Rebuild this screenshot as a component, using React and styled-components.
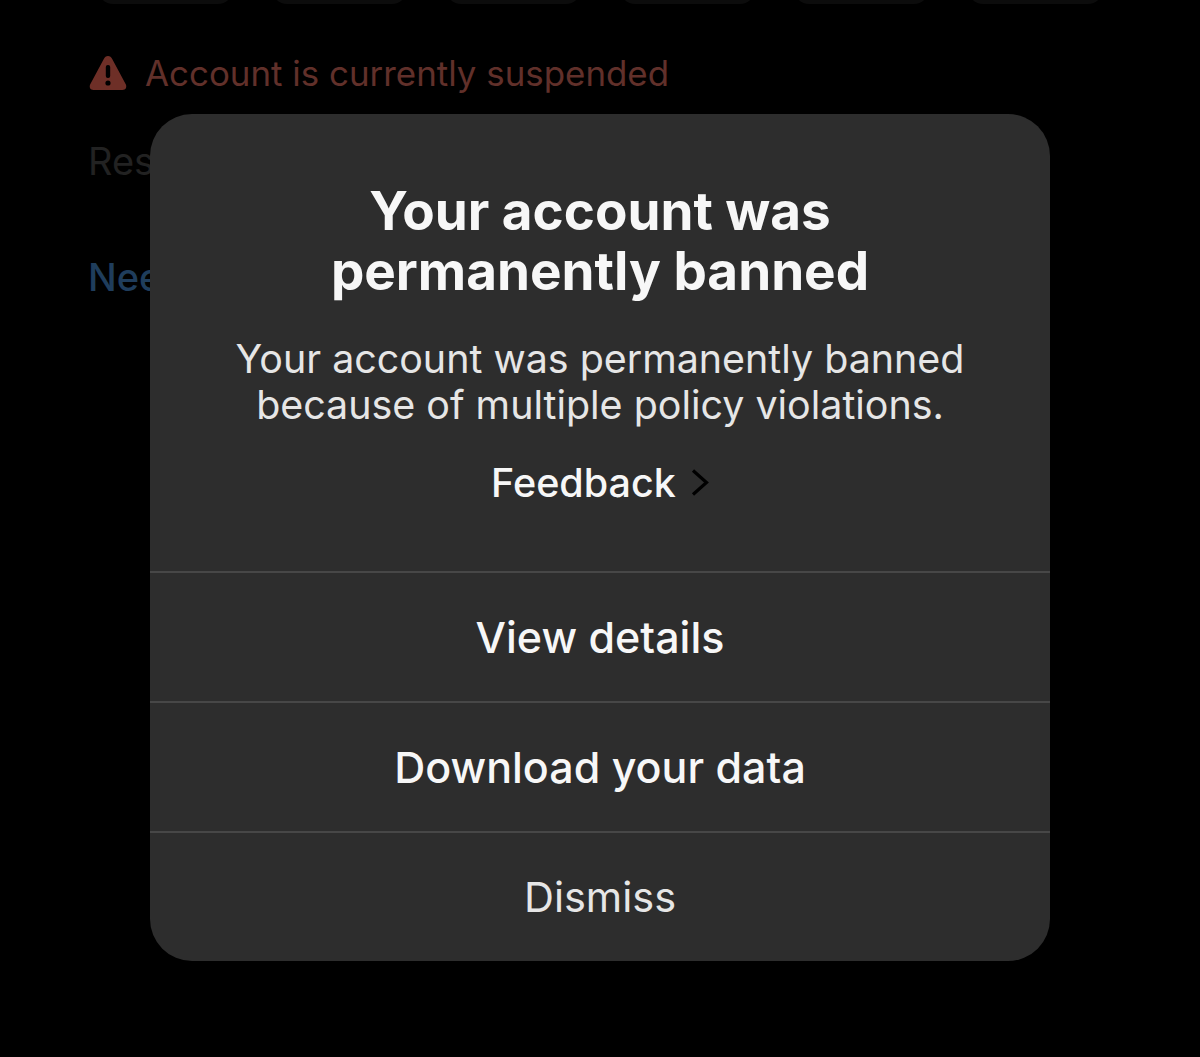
import React from "react";
import styled, { createGlobalStyle } from "styled-components";

const GlobalStyle = createGlobalStyle`
  html, body {
    margin: 0;
    padding: 0;
    background: #000;
  }
  * {
    box-sizing: border-box;
  }
`;

const App = () => {
  return (
    <Page>
      <GlobalStyle />
      <Background>
        <Pills>
          {[0, 1, 2, 3, 4, 5].map((i) => (
            <Pill key={i} />
          ))}
        </Pills>
        <Alert>
          <svg width="40" height="40" viewBox="0 0 40 40">
            <path
              d="M20 3 C22 3 23.2 4 24.2 6 L37.6 31 C39.2 34 37.8 37 34.4 37 L5.6 37 C2.2 37 0.8 34 2.4 31 L15.8 6 C16.8 4 18 3 20 3 Z"
              fill="#6e2f27"
            />
            <rect x="17.8" y="12" width="4.4" height="13" rx="2" fill="#000" />
            <circle cx="20" cy="30" r="2.6" fill="#000" />
          </svg>
          <AlertText>Account is currently suspended</AlertText>
        </Alert>
        <Reason>Restrictions on your account</Reason>
        <Help>Need help with this?</Help>
      </Background>
      <Modal>
        <ModalBody>
          <Title>
            Your account was
            <br />
            permanently banned
          </Title>
          <Message>
            Your account was permanently banned
            <br />
            because of multiple policy violations.
          </Message>
          <Feedback>
            Feedback
            <svg width="18" height="30" viewBox="0 0 18 30">
              <path d="M2 2.5 L15.5 14.5 L2 26.5" fill="none" stroke="#000" strokeWidth="3.2" />
            </svg>
          </Feedback>
        </ModalBody>
        <Action $bold>View details</Action>
        <Action $bold>Download your data</Action>
        <Action>Dismiss</Action>
      </Modal>
    </Page>
  );
};

const Page = styled.div`
  position: relative;
  width: 1200px;
  height: 1057px;
  overflow: hidden;
  background: #000;
  font-family: "Inter", "Liberation Sans", sans-serif;
`;

const Background = styled.div`
  display: flex;
  flex-direction: column;
  padding-left: 88px;
`;

const Pills = styled.div`
  display: flex;
  gap: 39px;
  margin-left: 10px;
  height: 4px;
  overflow: hidden;
`;

const Pill = styled.div`
  width: 135px;
  height: 30px;
  flex: none;
  margin-top: -26px;
  border-radius: 24px;
  background: #0c0c0c;
`;

const Alert = styled.div`
  display: flex;
  align-items: center;
  gap: 17px;
  margin-top: 49px;
  height: 40px;
`;

const AlertText = styled.span`
  font-size: 34.9px;
  color: #61302a;
  white-space: nowrap;
`;

const Reason = styled.div`
  margin-top: 46px;
  font-size: 38px;
  line-height: 44px;
  color: #222;
  white-space: nowrap;
`;

const Help = styled.div`
  margin-top: 72px;
  font-size: 38px;
  line-height: 44px;
  font-weight: 500;
  color: #1f3d5c;
  white-space: nowrap;
`;

const Modal = styled.div`
  position: absolute;
  left: 150px;
  top: 114px;
  width: 900px;
  height: 847px;
  display: flex;
  flex-direction: column;
  border-radius: 42px;
  background: #2d2d2d;
  overflow: hidden;
`;

const ModalBody = styled.div`
  height: 457px;
  display: flex;
  flex-direction: column;
  align-items: center;
  padding-top: 67px;
  text-align: center;
`;

const Title = styled.h1`
  margin: 0;
  font-size: 53px;
  line-height: 60px;
  font-weight: 700;
  color: #f7f7f7;
`;

const Message = styled.p`
  margin: 35px 0 0;
  font-size: 39.4px;
  line-height: 46px;
  font-weight: 400;
  color: #e6e6e6;
`;

const Feedback = styled.div`
  display: flex;
  align-items: center;
  gap: 15px;
  margin-top: 32px;
  font-size: 39.5px;
  line-height: 46px;
  font-weight: 500;
  color: #f7f7f7;
`;

const Action = styled.div`
  flex: 1;
  display: flex;
  align-items: center;
  justify-content: center;
  border-top: 2px solid #474747;
  font-size: ${(p) => (p.$bold ? "43px" : "41.5px")};
  font-weight: ${(p) => (p.$bold ? 500 : 400)};
  color: ${(p) => (p.$bold ? "#f7f7f7" : "#e6e6e6")};
`;

export default App;
